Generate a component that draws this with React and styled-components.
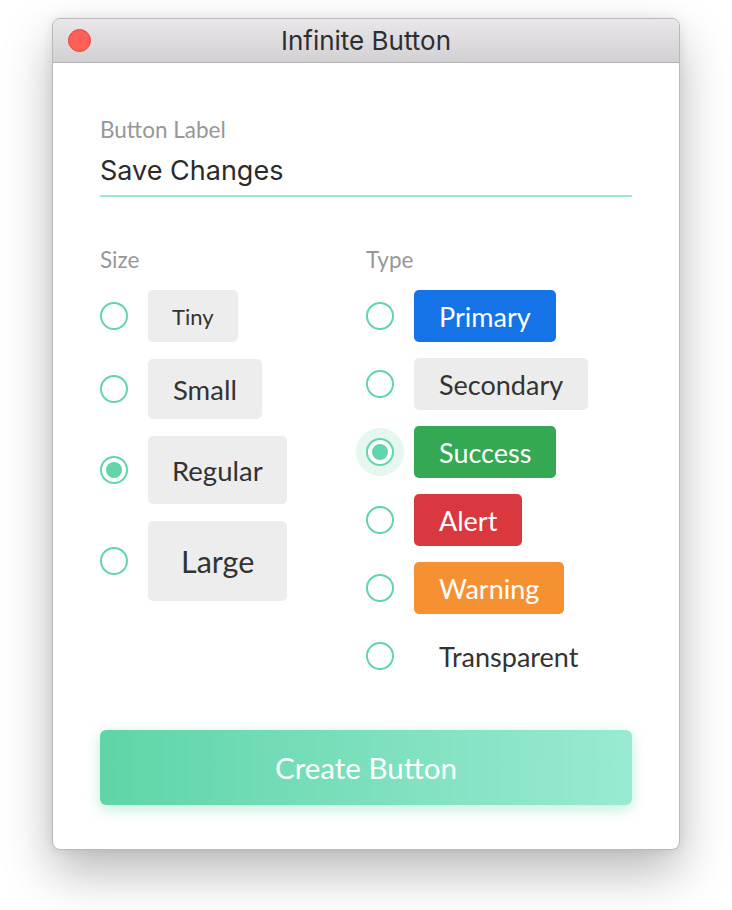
import React, { useState } from "react";
import styled, { createGlobalStyle, css } from "styled-components";

const GlobalStyle = createGlobalStyle`
    body {
        margin: 0;
        background: #ffffff;
        font-family: "Lato", "Open Sans", sans-serif;
    }
`;

const sizes = [
    { id: "tiny", label: "Tiny", height: 52, font: 22, pad: 24 },
    { id: "small", label: "Small", height: 60, font: 27.5, pad: 25 },
    { id: "regular", label: "Regular", height: 68, font: 27.5, pad: 24 },
    { id: "large", label: "Large", height: 80, font: 30.5, pad: 33 },
];

const types = [
    { id: "primary", label: "Primary", bg: "#1473e6", color: "#ffffff" },
    { id: "secondary", label: "Secondary", bg: "#ececec", color: "#333333" },
    { id: "success", label: "Success", bg: "#35a853", color: "#ffffff" },
    { id: "alert", label: "Alert", bg: "#d9393e", color: "#ffffff" },
    { id: "warning", label: "Warning", bg: "#f69133", color: "#ffffff" },
    { id: "transparent", label: "Transparent", bg: "transparent", color: "#333333" },
];

const App = () => {
    const [label, setLabel] = useState("Save Changes");
    const [size, setSize] = useState("regular");
    const [type, setType] = useState("success");

    return (
        <Page>
            <GlobalStyle />
            <Window>
                <TitleBar>
                    <CloseDot />
                    <Title>Infinite Button</Title>
                </TitleBar>
                <Content>
                    <Field>
                        <FieldLabel>Button Label</FieldLabel>
                        <Input value={label} onChange={(e) => setLabel(e.target.value)} />
                    </Field>
                    <Options>
                        <Column>
                            <FieldLabel>Size</FieldLabel>
                            <List>
                                {sizes.map((s) => (
                                    <Row key={s.id} onClick={() => setSize(s.id)}>
                                        <Radio checked={size === s.id} />
                                        <SizeButton $height={s.height} $font={s.font} $pad={s.pad}>
                                            {s.label}
                                        </SizeButton>
                                    </Row>
                                ))}
                            </List>
                        </Column>
                        <Column>
                            <FieldLabel>Type</FieldLabel>
                            <List $gap={16}>
                                {types.map((t) => (
                                    <Row key={t.id} onClick={() => setType(t.id)}>
                                        <Radio checked={type === t.id} $focused={type === t.id} />
                                        <TypeButton $bg={t.bg} $color={t.color}>
                                            {t.label}
                                        </TypeButton>
                                    </Row>
                                ))}
                            </List>
                        </Column>
                    </Options>
                    <CreateButton>Create Button</CreateButton>
                </Content>
            </Window>
        </Page>
    );
};

// Styled Components
const Page = styled.div`
    min-height: 100vh;
    box-sizing: border-box;
    padding: 18px 0 60px 52px;
`;

const Window = styled.div`
    width: 628px;
    height: 832px;
    box-sizing: border-box;
    border: 1px solid #b9b9b9;
    border-radius: 8px;
    background: #ffffff;
    overflow: hidden;
    box-shadow: 0 22px 50px rgba(0, 0, 0, 0.28), 0 0 12px rgba(0, 0, 0, 0.08);
    display: flex;
    flex-direction: column;
`;

const TitleBar = styled.div`
    height: 43px;
    flex-shrink: 0;
    position: relative;
    display: flex;
    align-items: center;
    justify-content: center;
    background: linear-gradient(#e9e7e9, #d2d0d2);
    border-bottom: 1px solid #b2b2b2;
`;

const CloseDot = styled.span`
    position: absolute;
    left: 15px;
    top: 10px;
    width: 23px;
    height: 23px;
    border-radius: 50%;
    background: #fe5f57;
    box-sizing: border-box;
    border: 1px solid #e2463f;
`;

const Title = styled.div`
    font-family: "Inter", "Roboto", sans-serif;
    font-size: 26px;
    color: #2e2e2e;
`;

const Content = styled.div`
    flex: 1;
    padding: 54px 47px 0 47px;
    display: flex;
    flex-direction: column;
`;

const Field = styled.div`
    display: flex;
    flex-direction: column;
`;

const FieldLabel = styled.div`
    font-size: 22.5px;
    line-height: 26px;
    color: #979797;
`;

const Input = styled.input`
    margin-top: 11px;
    border: none;
    border-bottom: 2px solid #9de9d3;
    padding: 0 0 7px 0;
    font-family: "Inter", "Roboto", sans-serif;
    font-size: 27px;
    line-height: 34px;
    color: #2b2b2b;
    outline: none;
    background: transparent;
`;

const Options = styled.div`
    margin-top: 50px;
    display: grid;
    grid-template-columns: 266px 266px;
`;

const Column = styled.div`
    display: flex;
    flex-direction: column;
`;

const List = styled.div`
    margin-top: 17px;
    display: flex;
    flex-direction: column;
    gap: ${(p) => p.$gap || 17}px;
`;

const Row = styled.div`
    display: flex;
    align-items: center;
    gap: 20px;
    cursor: pointer;
`;

const Radio = styled.span`
    width: 28px;
    height: 28px;
    flex-shrink: 0;
    box-sizing: border-box;
    border: 2px solid #62d5a9;
    border-radius: 50%;
    background: #ffffff;
    display: flex;
    align-items: center;
    justify-content: center;
    ${(p) =>
        p.$focused &&
        css`
            box-shadow: 0 0 0 10px #e6f7f0;
        `}
    &::after {
        content: "";
        width: 16px;
        height: 16px;
        border-radius: 50%;
        background: #62d5a9;
        display: ${(p) => (p.checked ? "block" : "none")};
    }
`;

const buttonBase = css`
    display: inline-flex;
    align-items: center;
    justify-content: center;
    box-sizing: border-box;
    border-radius: 5px;
    white-space: nowrap;
`;

const SizeButton = styled.div`
    ${buttonBase};
    height: ${(p) => p.$height}px;
    padding: 0 ${(p) => p.$pad}px;
    font-size: ${(p) => p.$font}px;
    background: #ededed;
    color: #333333;
`;

const TypeButton = styled.div`
    ${buttonBase};
    height: 52px;
    padding: 0 25px;
    font-size: 27px;
    background: ${(p) => p.$bg};
    color: ${(p) => p.$color};
`;

const CreateButton = styled.button`
    margin-top: 48px;
    height: 75px;
    border: none;
    border-radius: 6px;
    background: linear-gradient(90deg, #5fd5a7, #99ead3);
    box-shadow: 0 4px 14px rgba(95, 213, 167, 0.4);
    color: #ffffff;
    font-family: "Lato", "Open Sans", sans-serif;
    font-size: 29.5px;
    cursor: pointer;
`;

export default App;
